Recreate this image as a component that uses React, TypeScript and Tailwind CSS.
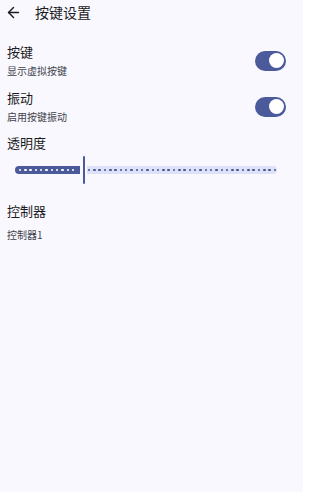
import { ArrowLeft } from "lucide-react";

const font = { fontFamily: '"Noto Sans CJK SC", "Noto Sans", sans-serif' };

const Toggle = () => (
  <div className="w-[31px] h-[20px] rounded-full bg-[#4a5a9b] flex items-center justify-end pr-[2.5px]">
    <div className="w-[15px] h-[15px] rounded-full bg-white" />
  </div>
);

const SwitchRow = ({ title, sub, top }: { title: string; sub: string; top: string }) => (
  <div className={`flex items-center justify-between pr-[17px] ${top}`}>
    <div className="flex flex-col">
      <span className="text-[13px] leading-[18px] text-[#1b1b21]">{title}</span>
      <span className="mt-[3px] text-[10px] leading-[14px] text-[#3f414a]">{sub}</span>
    </div>
    <Toggle />
  </div>
);

// track runs x 15..277, stops at 20 + 5.31k
const stops = Array.from({ length: 49 }, (_, k) => 20 + k * 5.31 - 15);

const Slider = () => (
  <div className="relative mt-[4px] h-[28px] ml-[8px] w-[262px] flex items-center">
    <div className="h-[8px] w-[65px] rounded-l-full rounded-r-[2px] bg-[#4a5a9b]" />
    <div className="ml-[3px] h-[28px] w-[2px] rounded-full bg-[#4a5a9b]" />
    <div className="ml-[2px] h-[8px] flex-1 rounded-r-full rounded-l-[2px] bg-[#dde1f9]" />
    {stops
      .filter((x) => x < 63 || x > 73)
      .map((x, i) => (
        <div
          key={i}
          className={`absolute top-[12.75px] h-[2.5px] w-[2.5px] rounded-full ${x < 65 ? "bg-white" : "bg-[#44558f]"}`}
          style={{ left: x - 1.25 }}
        />
      ))}
  </div>
);

export default function App() {
  return (
    <div className="w-[303px] h-[492px] bg-[#f9f8ff] overflow-hidden" style={font}>
      <div className="flex items-center h-[25px]">
        <ArrowLeft className="ml-[5px] w-[17px] h-[17px] text-[#1b1b21]" strokeWidth={2} />
        <span className="ml-[13px] text-[14px] text-[#1b1b21]">按键设置</span>
      </div>
      <div className="pl-[7px]">
        <SwitchRow title="按键" sub="显示虚拟按键" top="mt-[18px]" />
        <SwitchRow title="振动" sub="启用按键振动" top="mt-[11px]" />
        <div className="mt-[10px] text-[13px] leading-[18px] text-[#1b1b21]">透明度</div>
        <Slider />
        <div className="mt-[18px] text-[13px] leading-[18px] text-[#1b1b21]">控制器</div>
        <div className="mt-[8px] text-[10px] leading-[14px] text-[#3f414a]">控制器1</div>
      </div>
    </div>
  );
}
